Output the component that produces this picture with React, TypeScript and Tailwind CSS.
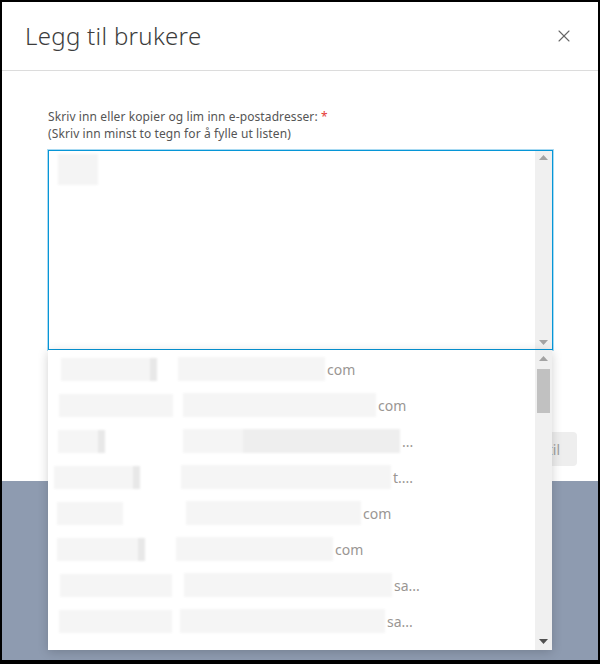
import { X } from 'lucide-react'

type Row = { lw: number; dark?: boolean; gap: number; rw: number; tail: string; mid?: boolean }

const rows: Row[] = [
  { lw: 96, dark: true, gap: 21, rw: 147, tail: 'com' },
  { lw: 114, gap: 10, rw: 193, tail: 'com' },
  { lw: 47, dark: true, gap: 78, rw: 217, tail: '...', mid: true },
  { lw: 86, dark: true, gap: 41, rw: 210, tail: 't....' },
  { lw: 66, gap: 63, rw: 175, tail: 'com' },
  { lw: 88, dark: true, gap: 31, rw: 157, tail: 'com' },
  { lw: 112, gap: 12, rw: 208, tail: 'sa...' },
  { lw: 113, gap: 8, rw: 205, tail: 'sa...' },
]

const lefts = [61, 59, 58, 54, 57, 57, 60, 59]

function Arrow({ up, dark }: { up?: boolean; dark?: boolean }) {
  return (
    <svg width="9" height="5" viewBox="0 0 9 5" className={dark ? 'fill-[#505050]' : 'fill-[#a3a3a3]'}>
      {up ? <path d="M4.5 0L9 5H0z" /> : <path d="M0 0h9L4.5 5z" />}
    </svg>
  )
}

export default function App() {
  return (
    <div className="w-[600px] h-[664px] bg-black pt-[2px] px-[2px] pb-[4px]" style={{ fontFamily: '"Noto Sans", sans-serif' }}>
      <div className="flex flex-col h-full">
        <div className="relative h-[479px] bg-white flex flex-col z-10">
          <div className="h-[69px] flex items-center justify-between pl-[23px] pr-[24px] border-b border-[#dcdcdc]">
            <h1 className="text-[24px] font-light text-[#3c3c3c] tracking-[0.3px]">Legg til brukere</h1>
            <X size={20} strokeWidth={1.3} className="text-[#666]" />
          </div>
          <div className="pt-[37px] pl-[46px] pr-[45px]">
            <p className="text-[12px] leading-[17px] text-[#555] tracking-[0.1px]">
              Skriv inn eller kopier og lim inn e-postadresser: <span className="text-[#e53935]">*</span>
              <br />
              (Skriv inn minst to tegn for å fylle ut listen)
            </p>
            <div className="mt-[8px] h-[200px] border border-[#0696d7] shadow-[0_0_0_1px_#a9daf2] flex">
              <div className="flex-1 pt-[3px] pl-[9px]">
                <div className="w-[40px] h-[31px] bg-[#f4f4f4] blur-[1px]" />
              </div>
              <div className="w-[17px] bg-[#f0f0f0] flex flex-col items-center justify-between py-[4px]">
                <Arrow up />
                <Arrow />
              </div>
            </div>
          </div>
          <div className="mt-auto flex justify-end pr-[21px] pb-[15px]">
            <button className="h-[34px] px-[17px] rounded bg-[#eeeeee] text-[#a0a0a0] text-[14px]">Legg til</button>
          </div>

          <div className="absolute left-[46px] top-[348px] w-[504px] h-[300px] bg-white shadow-[0_2px_10px_rgba(0,0,0,0.18)] flex z-20">
            <div className="flex-1 flex flex-col pt-[1px]">
              {rows.map((r, i) => (
                <div key={i} className="h-[36px] flex items-center text-[14px] text-[#9a9693]">
                  <div className="flex h-[23px] blur-[1px]" style={{ marginLeft: lefts[i] - 48, width: r.lw }}>
                    <div className="flex-1 bg-[#f5f5f5]" />
                    {r.dark && <div className="w-[7px] bg-[#e8e8e8]" />}
                  </div>
                  <div className="h-[24px] blur-[1px] flex" style={{ marginLeft: r.gap, width: r.rw }}>
                    <div className="w-[60px] bg-[#f5f5f5]" />
                    <div className={r.mid ? 'flex-1 bg-[#eeeeee]' : 'flex-1 bg-[#f5f5f5]'} />
                  </div>
                  <span className="ml-[2px]">{r.tail}</span>
                </div>
              ))}
            </div>
            <div className="w-[17px] bg-[#f0f0f0] flex flex-col items-center py-[6px]">
              <Arrow up />
              <div className="mt-[8px] w-[13px] h-[44px] bg-[#c1c1c1]" />
              <div className="mt-auto">
                <Arrow dark />
              </div>
            </div>
          </div>
        </div>
        <div className="flex-1 bg-[#8e9bb0]" />
      </div>
    </div>
  )
}
